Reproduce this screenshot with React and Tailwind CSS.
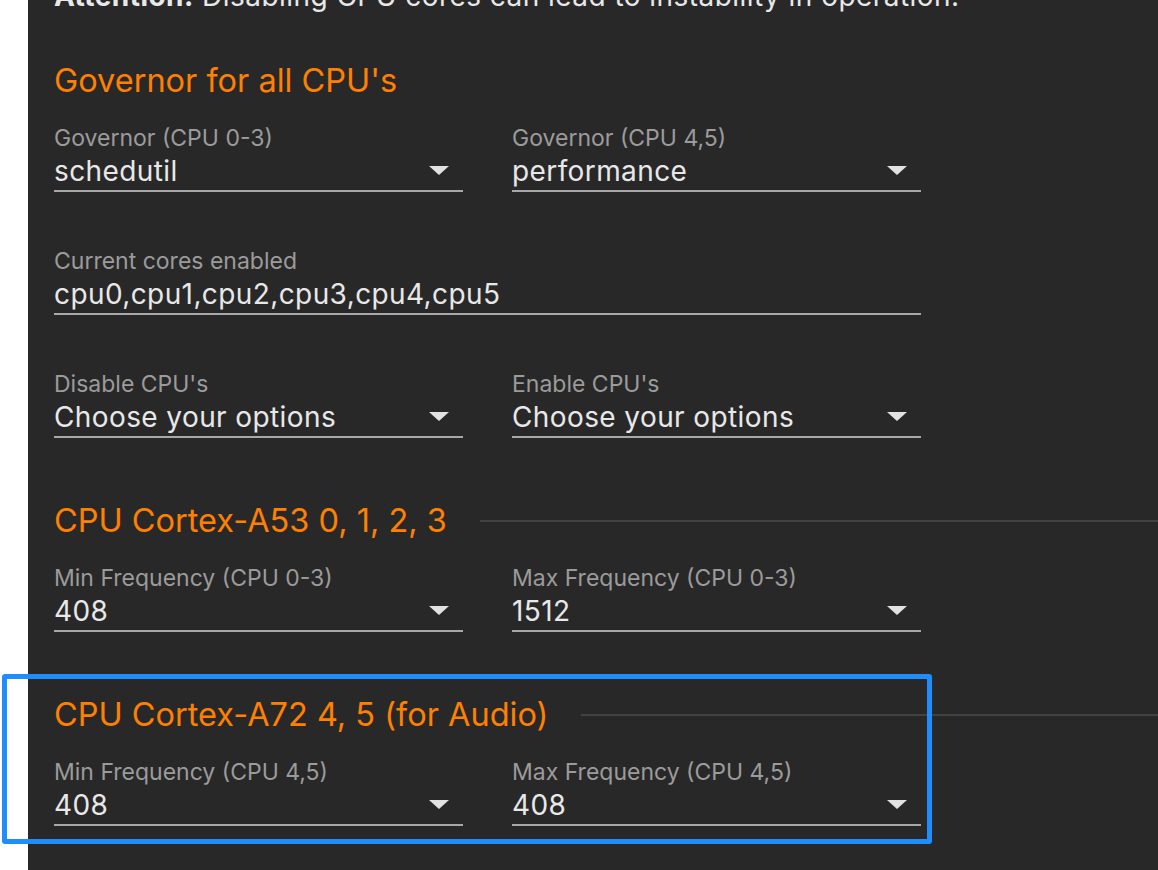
const FONT = { fontFamily: 'Inter, "Noto Sans", sans-serif' };

function Arrow() {
  return (
    <svg width="20" height="9" viewBox="0 0 20 9" className="shrink-0">
      <path d="M0 0 L20 0 L10 9 Z" fill="#e2e2e2" />
    </svg>
  );
}

function Field({ label, value, select = true, wide = false }) {
  return (
    <div className={wide ? 'w-[867px]' : 'w-[409px]'}>
      <div className="text-[23px] leading-[26px] text-[#9b9b9b]">{label}</div>
      <div className="flex h-[41px] items-center justify-between border-b-2 border-[#a8a8a8] pr-[14px]">
        <span className="text-[28px] leading-[34px] tracking-[0.4px] text-[#e8e8e8]">{value}</span>
        {select && <Arrow />}
      </div>
    </div>
  );
}

function SectionTitle({ children, line = false, className = '' }) {
  return (
    <div className={`flex h-[40px] items-center ${className}`}>
      <h2 className="whitespace-nowrap text-[32.5px] leading-[40px] text-[#ff8000]">{children}</h2>
      {line && <div className="ml-[33px] h-[2px] flex-1 bg-[#424242]" />}
    </div>
  );
}

export default function App() {
  return (
    <div className="relative flex h-[870px] overflow-hidden bg-white" style={FONT}>
      <div className="w-[28px] shrink-0" />
      <main className="flex-1 bg-[#282828] pl-[26px]">
        <p className="-mt-[21px] whitespace-nowrap text-[28px] leading-[34px] tracking-[0.45px] text-[#e8e8e8]">
          <strong className="font-bold">Attention:</strong> Disabling CPU cores can lead to instability in operation.
        </p>

        <SectionTitle className="mt-[48px]">Governor for all CPU's</SectionTitle>
        <div className="mt-[24px] flex gap-[49px]">
          <Field label="Governor (CPU 0-3)" value="schedutil" />
          <Field label="Governor (CPU 4,5)" value="performance" />
        </div>

        <div className="mt-[56px]">
          <Field label="Current cores enabled" value="cpu0,cpu1,cpu2,cpu3,cpu4,cpu5" select={false} wide />
        </div>

        <div className="mt-[56px] flex gap-[49px]">
          <Field label="Disable CPU's" value="Choose your options" />
          <Field label="Enable CPU's" value="Choose your options" />
        </div>

        <SectionTitle line className="mt-[63px]">CPU Cortex-A53 0, 1, 2, 3</SectionTitle>
        <div className="mt-[24px] flex gap-[49px]">
          <Field label="Min Frequency (CPU 0-3)" value="408" />
          <Field label="Max Frequency (CPU 0-3)" value="1512" />
        </div>

        <SectionTitle line className="mt-[63px]">CPU Cortex-A72 4, 5 (for Audio)</SectionTitle>
        <div className="mt-[24px] flex gap-[49px]">
          <Field label="Min Frequency (CPU 4,5)" value="408" />
          <Field label="Max Frequency (CPU 4,5)" value="408" />
        </div>
      </main>

      {/* highlight frame drawn over the audio section */}
      <div className="pointer-events-none absolute left-[2px] top-[674px] h-[170px] w-[930px] rounded-[3px] border-[5px] border-[#1e8eff]" />
    </div>
  );
}
